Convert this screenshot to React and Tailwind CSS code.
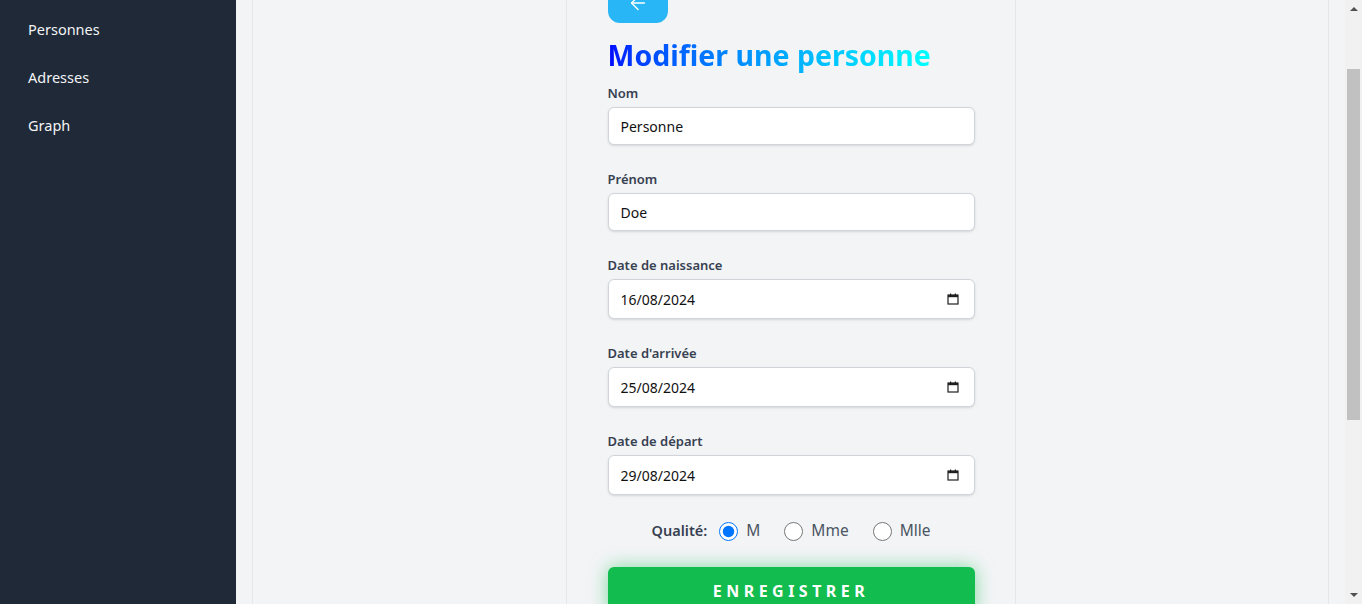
import { useLayoutEffect, useRef, useState } from 'react'
import { ArrowLeft } from 'lucide-react'

const FONT = { fontFamily: '"Segoe UI", "Noto Sans", sans-serif' }

function CalendarIcon() {
  return (
    <svg width="12" height="12" viewBox="0 0 12 12" fill="none">
      <rect x="1" y="2" width="10" height="9" stroke="#1f1f1f" strokeWidth="1.2" />
      <rect x="1" y="2" width="10" height="2.2" fill="#1f1f1f" />
      <rect x="3" y="0.5" width="1.2" height="2" fill="#1f1f1f" />
      <rect x="7.8" y="0.5" width="1.2" height="2" fill="#1f1f1f" />
    </svg>
  )
}

function Field({ label, value, date }) {
  return (
    <div className="mb-6">
      <label className="block text-[13px] leading-5 font-semibold text-[#374151] mb-1">{label}</label>
      <div className="relative">
        <input
          type="text"
          readOnly
          value={value}
          className={`w-full ${date ? 'h-[40px]' : 'h-[38px]'} px-3 text-sm text-[#111] bg-white border border-[#d1d5db] rounded-md shadow-sm outline-none`}
        />
        {date && (
          <span className="absolute right-[16px] top-1/2 -translate-y-1/2 flex">
            <CalendarIcon />
          </span>
        )}
      </div>
    </div>
  )
}

function FakeScrollbar() {
  return (
    <div className="w-[17px] shrink-0 h-full bg-[#f1f1f1] flex flex-col">
      <div className="h-[17px] flex items-center justify-center">
        <svg width="8" height="5" viewBox="0 0 8 5"><path d="M0 5 L4 1 L8 5 Z" fill="#505050" /></svg>
      </div>
      <div className="flex-1 px-[2px]">
        <div className="mt-[52px] h-[351px] bg-[#c1c1c1]" />
      </div>
      <div className="h-[17px] flex items-center justify-center">
        <svg width="8" height="5" viewBox="0 0 8 5"><path d="M0 0 L4 4 L8 0 Z" fill="#505050" /></svg>
      </div>
    </div>
  )
}

export default function App() {
  const mainRef = useRef(null)
  const [qualite, setQualite] = useState('M')

  useLayoutEffect(() => {
    if (mainRef.current) mainRef.current.scrollTop = 89
  }, [])

  return (
    <div className="flex h-[604px] w-full overflow-hidden bg-[#f3f4f6]" style={FONT}>
      {/* Sidebar */}
      <aside className="w-[236px] shrink-0 bg-[#1f2937] pt-[6px]">
        {['Personnes', 'Adresses', 'Graph'].map(item => (
          <div key={item} className="h-12 flex items-center px-7 text-[14.5px] text-[#f3f4f6]">
            {item}
          </div>
        ))}
      </aside>

      {/* Main */}
      <main ref={mainRef} className="flex-1 h-full overflow-y-scroll p-4 [scrollbar-width:none]">
        <div className="min-h-[949px] border-x border-[#e5e7eb] py-4">
          <div className="mx-auto w-[450px] border-x border-[#e5e7eb] bg-[#f3f4f6] py-10 pl-[41px] pr-10">
            <button className="flex items-center justify-center w-[60px] h-[40px] bg-[#29b6f6] rounded-xl text-white mb-[14px]">
              <ArrowLeft size={22} strokeWidth={1.5} />
            </button>

            <h1 className="inline-block text-[28.5px] leading-[36px] font-bold bg-linear-to-r from-[#0000ff] to-[#00ffff] bg-clip-text text-transparent mb-2.5">
              Modifier une personne
            </h1>

            <Field label="Nom" value="Personne" />
            <Field label="Prénom" value="Doe" />
            <Field label="Date de naissance" value="16/08/2024" date />
            <Field label="Date d'arrivée" value="25/08/2024" date />
            <Field label="Date de départ" value="29/08/2024" date />

            <div className="flex items-center justify-center h-6">
              <span className="font-semibold text-[#374151] text-[14.5px] mr-3">Qualité:</span>
              <div className="flex items-center gap-6">
                {['M', 'Mme', 'Mlle'].map(q => (
                  <label key={q} className="flex items-center gap-2 text-[15.5px] text-[#4b5563] cursor-pointer">
                    <input
                      type="radio"
                      name="qualite"
                      checked={qualite === q}
                      onChange={() => setQualite(q)}
                      className="w-[19px] h-[19px] m-0"
                    />
                    {q}
                  </label>
                ))}
              </div>
            </div>

            <button className="mt-6 w-full h-12 rounded-md bg-[#13bc4f] text-white font-bold text-[16px] tracking-[0.28em] shadow-[0_0_18px_rgba(34,197,94,0.55)]">
              ENREGISTRER
            </button>
          </div>
        </div>
      </main>

      <FakeScrollbar />
    </div>
  )
}
